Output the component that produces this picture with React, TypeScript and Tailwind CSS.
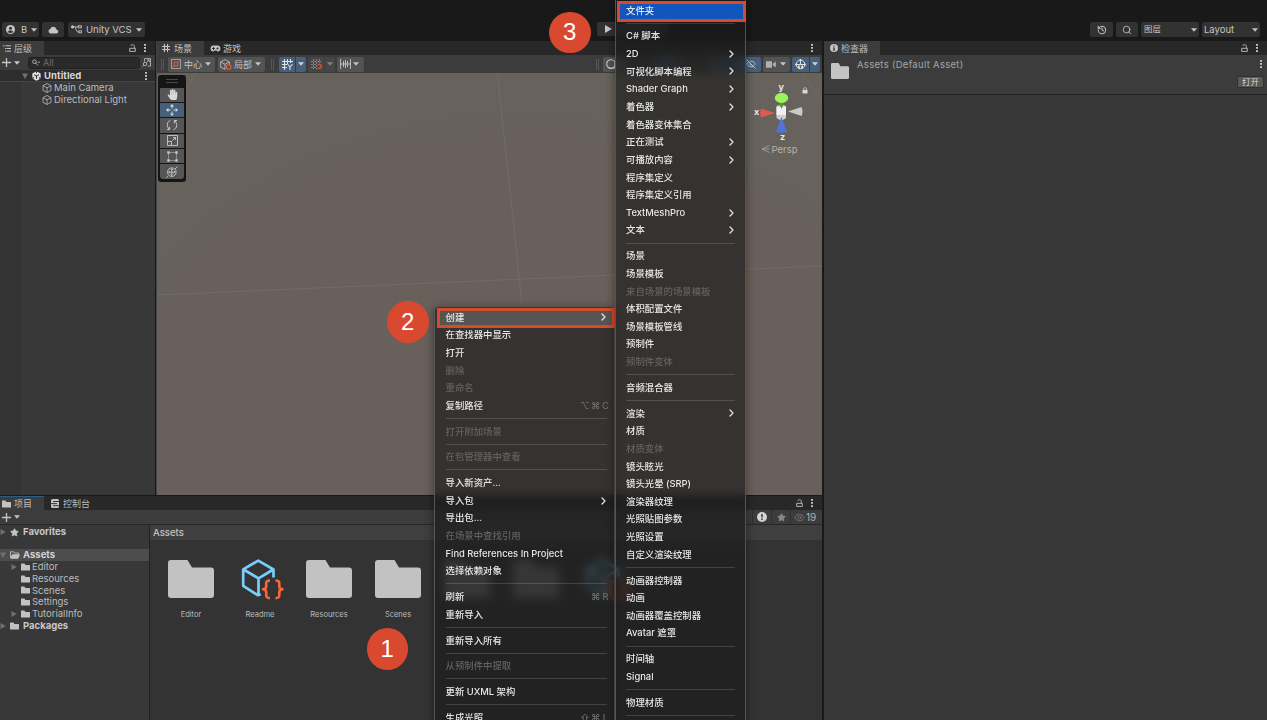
import React from 'react';
import { Search, History, Star, Eye, EyeOff } from 'lucide-react';
import { FaHandPaper } from 'react-icons/fa';

interface MenuEntry {
    label?: string;
    sub?: boolean;
    disabled?: boolean;
    keys?: string;
    separator?: boolean;
}

const SEP: MenuEntry = { separator: true };

const ASSET_MENU: MenuEntry[] = [
    { label: '创建', sub: true },
    { label: '在查找器中显示' },
    { label: '打开' },
    { label: '删除', disabled: true },
    { label: '重命名', disabled: true },
    { label: '复制路径', keys: '⌥⌘C' },
    SEP,
    { label: '打开附加场景', disabled: true },
    SEP,
    { label: '在包管理器中查看', disabled: true },
    SEP,
    { label: '导入新资产...' },
    { label: '导入包', sub: true },
    { label: '导出包...' },
    { label: '在场景中查找引用', disabled: true },
    { label: 'Find References In Project' },
    { label: '选择依赖对象' },
    SEP,
    { label: '刷新', keys: '⌘R' },
    { label: '重新导入' },
    SEP,
    { label: '重新导入所有' },
    SEP,
    { label: '从预制件中提取', disabled: true },
    SEP,
    { label: '更新 UXML 架构' },
    SEP,
    { label: '生成光照', keys: '⇧⌘L' },
];

const CREATE_MENU: MenuEntry[] = [
    { label: '文件夹' },
    SEP,
    { label: 'C# 脚本' },
    { label: '2D', sub: true },
    { label: '可视化脚本编程', sub: true },
    { label: 'Shader Graph', sub: true },
    { label: '着色器', sub: true },
    { label: '着色器变体集合' },
    { label: '正在测试', sub: true },
    { label: '可播放内容', sub: true },
    { label: '程序集定义' },
    { label: '程序集定义引用' },
    { label: 'TextMeshPro', sub: true },
    { label: '文本', sub: true },
    SEP,
    { label: '场景' },
    { label: '场景模板' },
    { label: '来自场景的场景模板', disabled: true },
    { label: '体积配置文件' },
    { label: '场景模板管线' },
    { label: '预制件' },
    { label: '预制件变体', disabled: true },
    SEP,
    { label: '音频混合器' },
    SEP,
    { label: '渲染', sub: true },
    { label: '材质' },
    { label: '材质变体', disabled: true },
    { label: '镜头眩光' },
    { label: '镜头光晕 (SRP)' },
    { label: '渲染器纹理' },
    { label: '光照贴图参数' },
    { label: '光照设置' },
    { label: '自定义渲染纹理' },
    SEP,
    { label: '动画器控制器' },
    { label: '动画' },
    { label: '动画器覆盖控制器' },
    { label: 'Avatar 遮罩' },
    SEP,
    { label: '时间轴' },
    { label: 'Signal' },
    SEP,
    { label: '物理材质' },
    SEP,
];

/* ---------- small icons ---------- */

function Caret({ className = '' }: { className?: string }) {
    return (
        <svg className={`h-[4px] w-[6px] shrink-0 ${className}`} viewBox="0 0 6 4" fill="currentColor">
            <path d="M0 .3h6L3 3.7z" />
        </svg>
    );
}

function Chevron() {
    return (
        <svg className="h-[8px] w-[5px] shrink-0" viewBox="0 0 5 8" fill="none" stroke="#e4e4e4" strokeWidth="1.3" strokeLinecap="round" strokeLinejoin="round">
            <path d="M1 1l3 3-3 3" />
        </svg>
    );
}

function Kebab({ className = '' }: { className?: string }) {
    return (
        <svg className={`h-[8px] w-[2px] shrink-0 ${className}`} viewBox="0 0 2 8" fill="#c4c4c4">
            <path d="M0 0h2v1.7H0zM0 3.1h2v1.7H0zM0 6.2h2v1.7H0z" />
        </svg>
    );
}

function Lock({ className = '' }: { className?: string }) {
    return (
        <svg className={`h-[8px] w-[7px] shrink-0 ${className}`} viewBox="0 0 7 8" fill="none" stroke="#b4b4b4" strokeWidth="1">
            <path d="M.7 4.3h5.6v3.1H.7zM5.3 4V2.3C5.3 1.2 4.6.6 3.6.6S2 1.2 2 2" />
        </svg>
    );
}

function Plus() {
    return (
        <svg className="h-[9px] w-[9px] shrink-0" viewBox="0 0 9 9" stroke="#c4c4c4" strokeWidth="1.3">
            <path d="M0 4.5h9M4.5 0v9" />
        </svg>
    );
}

function Cube({ className = '' }: { className?: string }) {
    return (
        <svg className={`shrink-0 ${className}`} viewBox="0 0 10 11" fill="none" stroke="#b8b8b8" strokeWidth=".9" strokeLinejoin="round">
            <path d="M5 .6l4.4 2.3v5.2L5 10.4.6 8.1V2.9zM.6 2.9L5 5.3l4.4-2.4M5 5.3v5.1" />
        </svg>
    );
}

function SmallFolder({ open = false }: { open?: boolean }) {
    return open ? (
        <svg className="h-[8px] w-[10px] shrink-0" viewBox="0 0 10 8" fill="none" stroke="#c2c2c2" strokeWidth=".9">
            <path d="M.5 7V.8h3l1 1.2h4v1.3" />
            <path d="M.8 7.3l1.5-3.6h7.2L8 7.3z" fill="#c2c2c2" />
        </svg>
    ) : (
        <svg className="h-[8px] w-[9px] shrink-0" viewBox="0 0 9 8" fill="#c2c2c2">
            <path d="M0 .9Q0 .4.5.4h3L4.4 1.9h4.1q.5 0 .5.5v4.7q0 .5-.5.5h-8q-.5 0-.5-.5z" />
        </svg>
    );
}

function BigFolder({ className = '' }: { className?: string }) {
    return (
        <svg className={`h-[38px] w-[46px] shrink-0 ${className}`} viewBox="0 0 46 38" fill="#c2c2c2">
            <path d="M0 3q0-3 3-3h16.5l4.5 7.5h19q3 0 3 3V35q0 3-3 3H3q-3 0-3-3z" />
        </svg>
    );
}

function ReadmeIcon({ className = '' }: { className?: string }) {
    return (
        <svg className={`h-[41px] w-[43px] shrink-0 ${className}`} viewBox="0 0 43 41" fill="none" strokeLinejoin="round" strokeLinecap="butt">
            <path d="M32.5 18.500v-8L17.300 1.600 2.200 10.300v16.500L16.500 36q1 .5 3.200-.8M2.500 10.500l15 8.800L32.300 10.500M17.500 19.300v17" stroke="#79cdfa" strokeWidth="2.700" />
            <path d="M29 21.500c-3 0-3.800.8-3.800 2.800v3c0 1.700-.8 2.700-3.200 3 2.400.3 3.200 1.300 3.200 3v3c0 2 .8 2.800 3.800 2.800M34.500 21.500c3 0 3.800.8 3.800 2.800v3c0 1.700.8 2.700 3.200 3-2.400.3-3.200 1.300-3.200 3v3c0 2-.8 2.800-3.800 2.800" stroke="#fa6639" strokeWidth="2.600" />
        </svg>
    );
}

function Triangle({ open = false }: { open?: boolean }) {
    return (
        <svg className="h-[6px] w-[6px] shrink-0" viewBox="0 0 6 6" fill="#707070">
            {open ? <path d="M0 .5h6L3 6z" /> : <path d="M.5 0v6L5.800 3z" />}
        </svg>
    );
}

function GridIcon({ className = '' }: { className?: string }) {
    return (
        <svg className={`h-[8px] w-[8px] shrink-0 ${className}`} viewBox="0 0 8 8" fill="none" stroke="#c4c4c4" strokeWidth="1.1">
            <path d="M2.5 0v8M5.5 0v8M0 2.5h8M0 5.5h8" />
        </svg>
    );
}

function Grip({ className = '' }: { className?: string }) {
    return <div className={`h-[11px] w-[3px] shrink-0 border-x border-[#565656] ${className}`} />;
}

/* ---------- editor chrome ---------- */

function TopBar() {
    return (
        <div className="flex h-[41px] shrink-0 items-start bg-[#191919] pt-[22px] text-[#c4c4c4]">
            <div className="ml-[2px] flex h-[15px] w-[37px] items-center rounded-[2px] bg-[#323232] pl-[4px]">
                <svg className="h-[9px] w-[9px]" viewBox="0 0 9 9">
                    <circle cx="4.5" cy="4.5" r="4.5" fill="#c4c4c4" />
                    <circle cx="4.5" cy="3.3" r="1.5" fill="#323232" />
                    <path d="M1.8 7c.6-1.3 1.5-1.6 2.7-1.6S6.6 5.7 7.200 7c-1.5 1.2-3.9 1.2-5.4 0z" fill="#323232" />
                </svg>
                <span className="ml-[6px] w-[6px]">B</span>
                <Caret className="ml-[4px]" />
            </div>
            <div className="ml-[3px] flex h-[15px] w-[22px] items-center justify-center rounded-[2px] bg-[#323232]">
                <svg className="h-[8px] w-[11px]" viewBox="0 0 11 8" fill="#c4c4c4">
                    <path d="M2.5 7.5a2.3 2.3 0 01-.3-4.5 3.3 3.3 0 016.3.4 2.1 2.1 0 01.2 4.1z" />
                </svg>
            </div>
            <div className="ml-[4px] flex h-[15px] w-[77px] items-center rounded-[2px] bg-[#323232] pl-[3px]">
                <svg className="h-[9px] w-[11px] shrink-0" viewBox="0 0 11 9" fill="none" stroke="#c4c4c4" strokeWidth=".9">
                    <circle cx="1.5" cy="1.9" r="1.2" fill="#c4c4c4" />
                    <path d="M2 1.9h5M4 2c1 0 .8 4.8 2.8 4.8H8" />
                    <rect x="7.3" y=".8" width="3" height="2" />
                    <rect x="7.8" y="5.8" width="2.6" height="2" />
                </svg>
                <span className="ml-[4px] w-[47px] whitespace-nowrap">Unity VCS</span>
                <Caret className="ml-[3px]" />
            </div>
            <div className="ml-[452px] flex h-[14px] w-[70px] items-center rounded-[2px] bg-[#323232] pl-[8px]">
                <svg className="h-[8px] w-[7px]" viewBox="0 0 7 8" fill="#c4c4c4">
                    <path d="M0 0l7 4-7 4z" />
                </svg>
            </div>
            <div className="ml-auto flex h-[15px] w-[23px] items-center justify-center rounded-[2px] bg-[#323232]">
                <History className="h-[10px] w-[10px]" strokeWidth={2.4} />
            </div>
            <div className="ml-[3px] flex h-[15px] w-[22px] items-center justify-center rounded-[2px] bg-[#323232]">
                <Search className="h-[10px] w-[10px]" />
            </div>
            <div className="mr-[3px] ml-[3px] flex h-[15px] w-[58px] items-center justify-between rounded-[2px] bg-[#323232] pr-[2px] pl-[3px]">
                <span className="text-[8.5px]">图层</span>
                <Caret />
            </div>
            <div className="mr-[7px] flex h-[15px] w-[58px] items-center justify-between rounded-[2px] bg-[#323232] pr-[2px] pl-[2px]">
                <span>Layout</span>
                <Caret />
            </div>
        </div>
    );
}

function Hierarchy() {
    return (
        <div className="flex w-[155px] shrink-0 flex-col bg-[#383838]">
            <div className="flex h-[14px] shrink-0 items-center bg-[#282828]">
                <div className="flex h-full w-[44px] items-center gap-[3px] bg-[#3c3c3c] pl-[3px]">
                    <svg className="h-[7px] w-[8px]" viewBox="0 0 8 7" stroke="#c4c4c4" strokeWidth="1">
                        <path d="M0 .8h1.5M2.5 .8H8M2 3.5h1M3.5 3.5H8M2 6.2h1M3.5 6.2H8" />
                    </svg>
                    <span className="text-[9px] text-[#bdbdbd]">层级</span>
                </div>
                <Lock className="ml-auto" />
                <Kebab className="mr-[9px] ml-[8px]" />
            </div>
            <div className="flex h-[15px] shrink-0 items-center bg-[#3c3c3c] pl-[2px] text-[#c4c4c4]">
                <Plus />
                <Caret className="ml-[3px]" />
                <div className="ml-[8px] flex h-[12px] w-[112px] items-center gap-[3px] rounded-[3px] border border-[#212121] bg-[#2a2a2a] pl-[3px]">
                    <svg className="h-[7px] w-[8px]" viewBox="0 0 8 7" fill="none" stroke="#b0b0b0" strokeWidth="1">
                        <circle cx="2.5" cy="2.7" r="1.8" />
                        <path d="M3.8 4l2 2.3M5.8 3.2h2" />
                    </svg>
                    <span className="text-[9px] text-[#6e6e6e]">All</span>
                </div>
                <svg className="ml-[2px] h-[9px] w-[9px]" viewBox="0 0 9 9" fill="none" stroke="#b4b4b4" strokeWidth=".9">
                    <path d="M2.5 3.5V.6h6v7.5H6M7.2 1.9L4.5 4.6M5 1.9h2.2v2.2" />
                    <circle cx="3" cy="6" r="1.7" />
                    <path d="M1.8 7.2L.4 8.6" />
                </svg>
            </div>
            <div className="flex min-h-0 flex-1">
                <div className="w-[21px] shrink-0 bg-[#333333]" />
                <div className="flex-1 text-[#bcbcbc]">
                    <div className="-ml-[21px] flex h-[12px] items-center border-b border-[#444] bg-[#2d2d2d] pl-[22px] font-bold text-[#d6d6d6]">
                        <Triangle open />
                        <svg className="ml-[4px] h-[10px] w-[9px]" viewBox="0 0 10 11">
                            <path d="M5 .3l4.6 2.5v5.4L5 10.7.4 8.2V2.8z" fill="#e4e4e4" />
                            <path d="M5 5.6v3M5 5.6L2.3 4M5 5.6L7.7 4M5 0v2.5M.4 8.2l2-1M9.6 8.2l-2-1" stroke="#2d2d2d" strokeWidth="1.2" />
                        </svg>
                        <span className="ml-[3px] tracking-[0.1px]">Untitled</span>
                        <Kebab className="mr-[8px] ml-auto" />
                    </div>
                    <div className="flex h-[12px] items-center pl-[21px]">
                        <Cube className="h-[10px] w-[10px]" />
                        <span className="ml-[2px]">Main Camera</span>
                    </div>
                    <div className="flex h-[12px] items-center pl-[21px]">
                        <Cube className="h-[10px] w-[10px]" />
                        <span className="ml-[2px]">Directional Light</span>
                    </div>
                </div>
            </div>
        </div>
    );
}

function ToolPalette() {
    const box = 'flex h-[14.4px] w-[24px] items-center justify-center bg-[#565656]';
    return (
        <div className="absolute top-[2px] left-px flex h-[107px] w-[28px] flex-col items-center gap-[1px] rounded-[3px] bg-[#151515]">
            <div className="mt-[4px] mb-[3.5px] h-[4px] w-[12px] border-y border-[#4a4a4a]" />
            <div className={box}>
                <FaHandPaper className="h-[11px] w-[11px] text-[#d8d8d8]" />
            </div>
            <div className="flex h-[14.4px] w-[24px] items-center justify-center bg-[#46607c]">
                <svg className="h-[12px] w-[12px]" viewBox="0 0 12 12" fill="#dedede">
                    <path d="M6 0l2 2.4H4zM6 12l2-2.4H4zM0 6l2.4-2v4zM12 6L9.6 4v4zM5.5 2h1v2.5h-1zM5.5 7.5h1V10h-1zM2 5.5h2.5v1H2zM7.5 5.5H10v1H7.5z" />
                </svg>
            </div>
            <div className={box}>
                <svg className="h-[12px] w-[12px]" viewBox="0 0 12 12" fill="none" stroke="#c8c8c8" strokeWidth="1">
                    <path d="M4.5 1.2C.8 2.6.3 7.3 3.2 10.2M1 10.5h2.7V7.8M7.5 10.8c3.7-1.4 4.2-6.1 1.3-9M11 1.5H8.3v2.7" />
                </svg>
            </div>
            <div className={box}>
                <svg className="h-[11px] w-[11px]" viewBox="0 0 11 11" fill="none" stroke="#c8c8c8" strokeWidth=".9">
                    <path d="M.5.5h10v10H.5zM.5 6.5h4v4M5.5 5.5L8.5 2.5M6 2.5h2.5V5" />
                </svg>
            </div>
            <div className={box}>
                <svg className="h-[11px] w-[11px]" viewBox="0 0 11 11" fill="none" stroke="#c8c8c8">
                    <path d="M1.5 1.5h8v8h-8z" strokeWidth=".8" opacity=".6" />
                    <path d="M.3 1.5h2.4M8.300 1.5h2.4M.3 9.5h2.4M8.300 9.5h2.4" strokeWidth="2.400" />
                </svg>
            </div>
            <div className="flex h-[14.4px] w-[24px] items-center justify-center rounded-b-[3px] bg-[#565656]">
                <svg className="h-[12px] w-[12px]" viewBox="0 0 12 12" fill="none" stroke="#c8c8c8" strokeWidth=".9">
                    <circle cx="5.8" cy="6.2" r="4.3" />
                    <path d="M5.8 3v6.4M2.6 6.2H9M4.7 4l1.1-1.2L6.9 4M4.7 8.4l1.1 1.2 1.1-1.2M3.6 5.1L2.5 6.2l1.1 1.1M8 5.1l1.1 1.1L8 7.3M9 3l2.5-2.5M0 12l1.8-1.8" />
                </svg>
            </div>
        </div>
    );
}

function SceneView() {
    const dim = 'flex h-[15px] items-center justify-center bg-[#464646] text-[#858585]';
    const lit = 'flex h-[15px] items-center bg-[#46607c] text-[#d2d2d2]';
    return (
        <div className="flex w-[666px] shrink-0 flex-col border-l border-[#444] bg-[#3c3c3c] text-[9px] text-[#c4c4c4]">
            <div className="flex h-[14px] shrink-0 items-center bg-[#282828]">
                <div className="flex h-full w-[47px] items-center gap-[4px] bg-[#3c3c3c] pl-[5px]">
                    <GridIcon />
                    <span>场景</span>
                </div>
                <svg className="ml-[6px] h-[7px] w-[11px]" viewBox="0 0 11 7">
                    <path d="M3.5.6h4a2.9 2.9 0 010 5.8l-1-.8h-2l-1 .8a2.9 2.9 0 010-5.8z" fill="#c4c4c4" />
                    <path d="M2 3.5h3M3.5 2v3" stroke="#282828" strokeWidth=".9" />
                    <circle cx="7.5" cy="3.5" r="1" fill="#282828" />
                </svg>
                <span className="ml-[2px]">游戏</span>
                <Kebab className="mr-[9px] ml-auto" />
            </div>
            <div className="flex h-[18px] shrink-0 items-center">
                <Grip className="ml-[4px]" />
                <div className="ml-[4px] flex h-[15px] w-[47px] items-center rounded-[2px] bg-[#535353] pl-[3px]">
                    <svg className="h-[10px] w-[10px]" viewBox="0 0 10 10" fill="none">
                        <path d="M.5.5h9v9h-9z" stroke="#a8a8a8" strokeWidth=".9" />
                        <circle cx="5" cy="5" r="2" stroke="#e06038" strokeWidth="1.1" />
                        <path d="M1.5 8.5l2-2M6.5 3.5l2-2" stroke="#e06038" strokeWidth="1" />
                    </svg>
                    <span className="ml-[3px]">中心</span>
                    <Caret className="mr-[4px] ml-auto" />
                </div>
                <div className="ml-[3px] flex h-[15px] w-[47px] items-center rounded-[2px] bg-[#535353] pl-[2px]">
                    <svg className="h-[11px] w-[12px]" viewBox="0 0 12 11" fill="none">
                        <path d="M5 .6l4.4 2.3v3M5 .6L.6 2.9v5.2L5 10.4M.6 2.9L5 5.3l4.4-2.4M5 5.3v5.1" stroke="#b8b8b8" strokeWidth=".9" />
                        <circle cx="8.7" cy="8" r="2.3" stroke="#e06038" strokeWidth="1.1" />
                    </svg>
                    <span className="ml-[2px]">局部</span>
                    <Caret className="mr-[4px] ml-auto" />
                </div>
                <Grip className="ml-[6px]" />
                <div className={`ml-[5px] w-[16px] justify-center rounded-l-[2px] ${lit}`}>
                    <svg className="h-[11px] w-[11px]" viewBox="0 0 11 11" fill="none" stroke="#e0e0e0" strokeWidth="1.1">
                        <path d="M2.5 0v11M5.5 0v5M8.5 0v4M0 2.5h11M0 5.5h5M0 8.5h5M5.5 5l2.5 3 2.5-3M8 8v3" />
                    </svg>
                </div>
                <div className={`ml-px w-[10px] justify-center rounded-r-[2px] ${lit}`}>
                    <Caret />
                </div>
                <div className={`ml-[2px] w-[16px] rounded-l-[2px] ${dim}`}>
                    <svg className="h-[11px] w-[11px]" viewBox="0 0 11 11" fill="none" stroke="#8c8c8c" strokeWidth=".9">
                        <path d="M2.5 0v10M5.5 0v10M8.5 0v4M0 2.5h10M0 5.5h5M0 8.5h5" strokeDasharray="2 1" />
                        <path d="M6.5 5.5h1.8a1.9 1.9 0 010 3.8H6.5" stroke="#c2563a" strokeWidth="1.4" />
                    </svg>
                </div>
                <div className={`ml-px w-[10px] rounded-r-[2px] ${dim}`}>
                    <Caret />
                </div>
                <div className="ml-[2px] flex h-[15px] w-[27px] items-center justify-between rounded-[2px] bg-[#535353] pr-[5px] pl-[3px]">
                    <svg className="h-[10px] w-[11px]" viewBox="0 0 11 10" fill="none" stroke="#c8c8c8" strokeWidth=".9">
                        <path d="M.6 0v10M10.4 0v10M0 5h11M3.5 2v6M5.5 1v8M7.5 2v6" />
                    </svg>
                    <Caret />
                </div>
                <Grip className="ml-auto" />
                <div className="ml-[4px] flex h-[15px] w-[24px] items-center rounded-[2px] bg-[#535353] pl-[3px]">
                    <svg className="h-[10px] w-[10px]" viewBox="0 0 10 10" fill="none" stroke="#c8c8c8" strokeWidth="1.1">
                        <circle cx="5" cy="5" r="4.3" />
                        <path d="M8.8 3a4.5 4.5 0 01-6 6.2" strokeWidth="2" />
                    </svg>
                </div>
                <div className={`ml-[30px] w-[22px] opacity-50 ${lit}`} />
                <div className={`ml-[32px] w-[26px] opacity-50 ${lit}`} />
                <div className={`w-[24px] justify-end rounded-r-[2px] pr-[5px] ${lit}`}>
                    <EyeOff className="h-[10px] w-[10px]" />
                </div>
                <div className="ml-[2px] flex h-[15px] w-[27px] items-center justify-between rounded-[2px] bg-[#535353] pr-[4px] pl-[3px]">
                    <svg className="h-[7px] w-[10px]" viewBox="0 0 10 7" fill="#b0b0b0">
                        <path d="M0 .3h6v6.4H0zM6.8 2.8L9.8.6v5.8L6.8 4.2z" />
                    </svg>
                    <Caret />
                </div>
                <div className={`ml-[2px] w-[17px] justify-center rounded-l-[2px] ${lit}`}>
                    <svg className="h-[11px] w-[11px]" viewBox="0 0 11 11" fill="none" stroke="#e0e0e0" strokeWidth="1">
                        <circle cx="5.5" cy="5.5" r="4.3" />
                        <path d="M1 5.5h9M5.500 1.200v4.300" />
                        <path d="M4.7 0h1.6v1.8H4.7zM0 4.7h1.8v1.6H0zM9.2 4.7H11v1.6H9.2zM3 6.500h1.800v3H3zM6.200 6.500H8v3H6.200z" fill="#e0e0e0" stroke="none" />
                    </svg>
                </div>
                <div className={`mr-[2px] ml-px w-[10px] justify-center rounded-r-[2px] ${lit}`}>
                    <Caret />
                </div>
            </div>
            <div className="relative flex-1 overflow-hidden bg-[radial-gradient(ellipse_520px_430px_at_55%_100%,#69605b_82%,#67625b_90%)]">
                <svg className="absolute inset-0 h-full w-full" viewBox="0 0 664 422" fill="none" stroke="#6e716f" strokeWidth=".8">
                    <path d="M340 0l25 236M0 222l664-29M38 0l-9 16M645 2l19 23" />
                </svg>
                <ToolPalette />
                <svg className="absolute top-[6px] right-[10px] h-[78px] w-[60px]" viewBox="0 0 60 78">
                    <path d="M9 29.5l14 4.5-14 4.5q-1.5-4.5 0-9z" fill="#dc5a4e" />
                    <path d="M49.500 28L36 32.500l13.500 4.500q2-4.500 0-9z" fill="#c9c9c9" />
                    <path d="M24.500 27l5-1.500 4.500 1.500v12l-4.500 3-5-3z" fill="#cfcfcf" />
                    <path d="M24.500 28H34v8h-9.500z" fill="#f0f0f0" />
                    <path d="M25 20h9l-4.500 10z" fill="#5f8f3c" />
                    <ellipse cx="29.5" cy="19" rx="6.7" ry="5" fill="#9bf55c" />
                    <path d="M29.5 38l5.7 15q-5.500 1.600-11.400 0z" fill="#5272d8" />
                    <path d="M51.5 11V9.500q1.500-2 3 0V11" stroke="#d0d0d0" fill="none" strokeWidth=".8" />
                    <path d="M50.500 11h5v3.500h-5z" fill="#d8d8d8" />
                    <g fill="#e8e8e8" fontSize="9" fontWeight="700" fontFamily="Inter, sans-serif">
                        <text x="26.5" y="11">y</text>
                        <text x="2" y="36">x</text>
                        <text x="28" y="61">z</text>
                    </g>
                    <path d="M17.500 66.500l-7.5 3.500 7.500 3.500M10 70h7.500" stroke="#a9a6a3" strokeWidth=".8" fill="none" />
                    <text x="19.5" y="73.500" fill="#b6b3b0" fontSize="9.5" fontFamily="Inter, sans-serif">Persp</text>
                </svg>
            </div>
        </div>
    );
}

const TREE = [
    { name: 'Editor', expandable: true },
    { name: 'Resources', expandable: false },
    { name: 'Scenes', expandable: false },
    { name: 'Settings', expandable: false },
    { name: 'TutorialInfo', expandable: true },
];

function ProjectPanel() {
    return (
        <div className="flex h-[225px] shrink-0 flex-col border-t border-[#191919] bg-[#383838] text-[#bcbcbc]">
            <div className="flex h-[14px] shrink-0 items-center bg-[#282828] text-[9px]">
                <div className="flex h-full w-[44px] items-center gap-[3px] border-t border-[#2c5d87] bg-[#3c3c3c] pl-[2px]">
                    <SmallFolder />
                    <span>项目</span>
                </div>
                <svg className="ml-[7px] h-[9px] w-[8px]" viewBox="0 0 8 9">
                    <rect width="8" height="9" rx="1.5" fill="#c4c4c4" />
                    <path d="M2 2.5h6M0 4.6h6M2 6.700h6" stroke="#282828" strokeWidth=".9" />
                </svg>
                <span className="ml-[4px]">控制台</span>
                <Lock className="ml-auto" />
                <Kebab className="mr-[9px] ml-[8px]" />
            </div>
            <div className="flex h-[15px] shrink-0 items-center border-b border-[#262626] bg-[#3c3c3c] pl-[2px] text-[#c4c4c4]">
                <Plus />
                <Caret className="ml-[3px]" />
                <div className="ml-auto flex h-full w-[19px] items-center justify-center border-l border-[#303030]">
                    <svg className="h-[10px] w-[10px]" viewBox="0 0 10 10">
                        <circle cx="5" cy="5" r="5" fill="#d4d4d4" />
                        <path d="M4.3 2h1.4v3.600H4.300zM4.3 6.600h1.4V8H4.300z" fill="#333" />
                    </svg>
                </div>
                <div className="flex h-full w-[19px] items-center justify-center border-l border-[#303030]">
                    <Star className="h-[9px] w-[9px]" fill="#888" stroke="#888" />
                </div>
                <div className="flex h-full w-[32px] items-center gap-[1px] border-l border-[#303030] pl-[3px]">
                    <Eye className="h-[11px] w-[11px] text-[#747474]" />
                    <span className="text-[10px] text-[#b0b0b0]">19</span>
                </div>
            </div>
            <div className="flex min-h-0 flex-1">
                <div className="w-[150px] shrink-0 border-r border-[#222] pt-px">
                    <div className="flex h-[12px] items-center font-bold text-[#c8c8c8]">
                        <Triangle />
                        <Star className="ml-[4px] h-[9px] w-[9px]" fill="#c4c4c4" stroke="#c4c4c4" />
                        <span className="ml-[4px]">Favorites</span>
                    </div>
                    <div className="mt-[11px] flex h-[12px] items-center bg-[#4d4d4d] font-bold text-[#d2d2d2]">
                        <Triangle open />
                        <span className="ml-[4px]"><SmallFolder open /></span>
                        <span className="ml-[3px]">Assets</span>
                    </div>
                    {TREE.map((node) => (
                        <div key={node.name} className="flex h-[11.75px] items-center pl-[11px]">
                            <div className="w-[9.5px]">{node.expandable && <Triangle />}</div>
                            <SmallFolder />
                            <span className="ml-[2.5px]">{node.name}</span>
                        </div>
                    ))}
                    <div className="flex h-[12px] items-center font-bold text-[#c8c8c8]">
                        <Triangle />
                        <span className="ml-[4px]"><SmallFolder /></span>
                        <span className="ml-[4px]">Packages</span>
                    </div>
                </div>
                <div className="flex-1 bg-[#333333]">
                    <div className="flex h-[15px] items-center bg-[#3f3f3f] pl-[3px] font-medium text-[#c8c8c8]">Assets</div>
                    <div className="flex pt-[20px] pl-[6.5px] text-[7.5px]">
                        <AssetTile name="Editor"><BigFolder /></AssetTile>
                        <AssetTile name="Readme"><ReadmeIcon className="-mt-px ml-[4px]" /></AssetTile>
                        <AssetTile name="Resources"><BigFolder /></AssetTile>
                        <AssetTile name="Scenes"><BigFolder /></AssetTile>
                        <AssetTile><BigFolder className="opacity-40" /></AssetTile>
                        <AssetTile><BigFolder className="opacity-40" /></AssetTile>
                        <AssetTile><ReadmeIcon className="-mt-px ml-[4px]" /></AssetTile>
                    </div>
                </div>
            </div>
        </div>
    );
}

function AssetTile({ name, children }: { name?: string; children: React.ReactNode }) {
    return (
        <div className="flex w-[69px] flex-col items-center">
            <div className="flex h-[48px] items-start">{children}</div>
            {name && <span className="leading-[14px]">{name}</span>}
        </div>
    );
}

function Inspector() {
    return (
        <div className="flex flex-1 flex-col border-l-2 border-[#191919] bg-[#383838] text-[#bcbcbc]">
            <div className="flex h-[14px] shrink-0 items-center bg-[#282828]">
                <div className="flex h-full w-[56px] items-center gap-[3px] bg-[#3c3c3c] pl-[6px]">
                    <svg className="h-[8px] w-[8px]" viewBox="0 0 8 8">
                        <circle cx="4" cy="4" r="4" fill="#c4c4c4" />
                        <path d="M3.3 1.4h1.4v1.2H3.3zM3 3.4h1.7v2.4h.5v.8H2.900v-.8h.5V4.200H3z" fill="#333" />
                    </svg>
                    <span className="text-[9px]">检查器</span>
                </div>
                <Lock className="ml-auto" />
                <Kebab className="mr-[9px] ml-[8px]" />
            </div>
            <div className="flex h-[40px] shrink-0 border-b border-[#1f1f1f] bg-[#3c3c3c]">
                <svg className="mt-[8px] ml-[7px] h-[16px] w-[18px]" viewBox="0 0 46 38" preserveAspectRatio="none" fill="#c4c4c4">
                    <path d="M0 3q0-3 3-3h16.5l4.5 7.5h19q3 0 3 3V35q0 3-3 3H3q-3 0-3-3z" />
                </svg>
                <span className="mt-[4.5px] ml-[8px] tracking-[0.3px] text-[#a6a6a6]">Assets (Default Asset)</span>
                <div className="ml-auto flex flex-col items-end">
                    <Kebab className="mt-[5px] mr-[5px]" />
                    <div className="mt-[8px] mr-[3px] flex h-[12px] w-[27px] items-center justify-center rounded-[2px] border border-[#303030] bg-[#585858] text-[8.5px] text-[#d8d8d8]">打开</div>
                </div>
            </div>
        </div>
    );
}

/* ---------- context menus ---------- */

function MenuRow({ entry }: { entry: MenuEntry }) {
    if (entry.separator) {
        return (
            <div className="flex h-[8.15px] items-center">
                <div className="h-px w-full bg-white/15" />
            </div>
        );
    }
    return (
        <div className={`flex h-[17.65px] items-center ${entry.disabled ? 'text-[#646260]' : 'text-[#e6e6e6]'}`}>
            <span className="whitespace-nowrap">{entry.label}</span>
            {entry.sub && <span className="mr-[1px] ml-auto"><Chevron /></span>}
            {entry.keys && (
                <span className="-mr-[2px] ml-auto flex gap-[1.5px] font-normal text-[#767472]">
                    {[...entry.keys].map((k) => (
                        <span key={k} className="min-w-[7px] text-center">{k}</span>
                    ))}
                </span>
            )}
        </div>
    );
}

function AssetContextMenu() {
    return (
        <div className="absolute top-[306px] left-[434px] h-[430px] w-[181px] rounded-t-[5px] border border-[#5a5753] bg-[#1a1a1a]/65 pt-[1.5px] pr-[7px] pl-[10.5px] text-[9.4px] font-medium shadow-[0_2px_10px_rgba(0,0,0,0.45)] backdrop-blur-[5px]">
            <div className="absolute top-[1px] left-[1.5px] h-[20px] w-[178.5px] border-[3px] border-[#d9492c] bg-[#575553]" />
            <div className="relative">
                {ASSET_MENU.map((entry, i) => <MenuRow key={i} entry={entry} />)}
            </div>
        </div>
    );
}

function CreateSubmenu() {
    return (
        <div className="absolute -top-[5px] left-[615px] h-[740px] w-[131px] rounded-t-[5px] border border-[#55524f] bg-[#1a1a1a]/65 pt-[5.5px] pr-[10px] pl-[10px] text-[9.4px] font-medium shadow-[0_2px_10px_rgba(0,0,0,0.45)] backdrop-blur-[5px]">
            <div className="absolute top-[5px] left-[0.5px] h-[20.5px] w-[129px] border-[3px] border-[#d9492c] bg-[#1255bd]" />
            <div className="relative">
                {CREATE_MENU.map((entry, i) => <MenuRow key={i} entry={entry} />)}
            </div>
        </div>
    );
}

function StepBadge({ step, className }: { step: number; className: string }) {
    return (
        <div className={`absolute flex h-[41.5px] w-[41.5px] items-center justify-center rounded-full bg-[#d9492f] font-['Liberation_Sans',sans-serif] text-[24px] text-white ${className}`}>
            {step}
        </div>
    );
}

export default function App() {
    return (
        <div className="relative flex h-[720px] w-[1267px] flex-col overflow-hidden bg-[#191919] font-['Inter','Noto_Sans_CJK_SC',sans-serif] text-[9.5px] leading-none">
            <TopBar />
            <div className="flex min-h-0 flex-1">
                <div className="flex w-[822px] shrink-0 flex-col">
                    <div className="flex min-h-0 flex-1 gap-px">
                        <Hierarchy />
                        <SceneView />
                    </div>
                    <ProjectPanel />
                </div>
                <Inspector />
            </div>
            <AssetContextMenu />
            <CreateSubmenu />
            <StepBadge step={1} className="top-[628px] left-[366.5px]" />
            <StepBadge step={2} className="top-[301px] left-[387px]" />
            <StepBadge step={3} className="top-[11.5px] left-[549px]" />
        </div>
    );
}
